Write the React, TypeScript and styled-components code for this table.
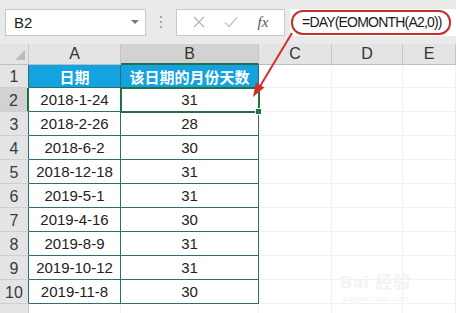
import React, { FC } from "react";
import styled, { createGlobalStyle, css } from "styled-components";

const GlobalStyle = createGlobalStyle`
  html, body {
    margin: 0;
    padding: 0;
    background: #ffffff;
  }
  body {
    font-family: "Liberation Sans", "Noto Sans CJK SC", sans-serif;
    width: 456px;
    height: 313px;
    overflow: hidden;
  }
`;

const teal = "#2b6f6f";
const green = "#217346";
const headGray = "#e4e4e4";

const Root = styled.div`
  position: relative;
  width: 456px;
  height: 313px;
  overflow: hidden;
  background: #fff;
`;

/* ---------- formula toolbar ---------- */

const Toolbar = styled.div`
  display: flex;
  align-items: center;
  height: 44px;
  padding-left: 5px;
  background: #eaeaea;
  box-sizing: border-box;
`;

const Field = styled.div<{ $width?: number }>`
  display: flex;
  align-items: center;
  box-sizing: border-box;
  height: 27px;
  width: ${({ $width }) => ($width ? `${$width}px` : "auto")};
  background: #fff;
  border: 1px solid #c9c9c9;
`;

const NameBox = styled(Field)`
  justify-content: space-between;
  padding: 0 6px 0 8px;
  font-size: 15px;
  color: #222;
`;

const Caret = styled.span`
  width: 0;
  height: 0;
  border-left: 4px solid transparent;
  border-right: 4px solid transparent;
  border-top: 4px solid #777;
`;

const Dots = styled.div`
  display: flex;
  flex-direction: column;
  gap: 3px;
  width: 30px;
  align-items: center;
  span {
    width: 2px;
    height: 2px;
    background: #a8a8a8;
  }
`;

const ButtonBox = styled(Field)`
  justify-content: space-around;
  padding: 0 6px;
`;

const FxLabel = styled.span`
  font-family: "Liberation Serif", serif;
  font-style: italic;
  font-size: 15px;
  color: #555;
`;

const FormulaBar = styled(Field)`
  flex: 1;
  margin-left: 5px;
  border: none;
  background: #fff;
  padding-left: 1px;
`;

const FormulaText = styled.div`
  display: flex;
  align-items: center;
  height: 25px;
  width: 160px;
  box-sizing: border-box;
  padding-left: 9px;
  border: 2px solid #c4302b;
  border-radius: 12px;
  font-family: "Liberation Sans", sans-serif;
  font-size: 14px;
  letter-spacing: -0.8px;
  color: #1a1a1a;
  white-space: nowrap;
`;

/* ---------- sheet grid ---------- */

const Sheet = styled.div`
  display: grid;
  grid-template-columns: 29px 92px 138px 73px 71px 1fr;
  grid-template-rows: 21px 23px repeat(10, 24px);
`;

const HeadCell = styled.div<{ $active?: boolean; $corner?: boolean }>`
  display: flex;
  align-items: center;
  justify-content: center;
  box-sizing: border-box;
  background: ${({ $active }) => ($active ? "#d2d2d2" : headGray)};
  border-right: 1px solid #c6c6c6;
  border-bottom: ${({ $active }) =>
    $active ? `2px solid ${green}` : "1px solid #bdbdbd"};
  font-size: 16px;
  color: #333;
  position: relative;
  ${({ $corner }) =>
    $corner &&
    css`
      &::after {
        content: "";
        position: absolute;
        right: 3px;
        bottom: 4px;
        border-left: 10px solid transparent;
        border-bottom: 10px solid #bcbcbc;
      }
    `}
`;

const RowHead = styled.div<{ $active?: boolean; $inTable?: boolean }>`
  display: flex;
  align-items: flex-end;
  justify-content: center;
  padding-bottom: 1px;
  box-sizing: border-box;
  background: ${({ $active }) => ($active ? "#d2d2d2" : headGray)};
  border-bottom: 1px solid #cfcfcf;
  border-right: ${({ $active, $inTable }) =>
    $active
      ? `2px solid ${green}`
      : $inTable
      ? `1px solid ${teal}`
      : "1px solid #c6c6c6"};
  font-size: 16px;
  color: #3a3a3a;
`;

const Cell = styled.div<{ $kind: "title" | "data" | "empty" }>`
  display: flex;
  align-items: center;
  justify-content: center;
  box-sizing: border-box;
  font-size: 15px;
  color: #222;
  white-space: nowrap;
  ${({ $kind }) =>
    $kind === "title" &&
    css`
      background: #14a3e0;
      color: #fff;
      font-family: "Noto Sans CJK SC", sans-serif;
      font-weight: bold;
      font-size: 15px;
      border-right: 1px solid ${teal};
      border-bottom: 1px solid ${teal};
    `}
  ${({ $kind }) =>
    $kind === "data" &&
    css`
      border-right: 1px solid ${teal};
      border-bottom: 1px solid ${teal};
    `}
  ${({ $kind }) =>
    $kind === "empty" &&
    css`
      border-right: 1px solid #f1f1f1;
      border-bottom: 1px solid #f1f1f1;
    `}
`;

const SelectedCell = styled(Cell)`
  position: relative;
  z-index: 2;
  outline: 2px solid ${green};
  outline-offset: -1px;

  &::after {
    content: "";
    position: absolute;
    right: -4px;
    bottom: -4px;
    width: 5px;
    height: 5px;
    background: ${green};
    border: 1px solid #fff;
  }
`;

const Overlay = styled.svg`
  position: absolute;
  left: 0;
  top: 0;
  z-index: 5;
  pointer-events: none;
`;

const Watermark = styled.div`
  position: absolute;
  left: 340px;
  top: 268px;
  display: flex;
  flex-direction: column;
  align-items: center;
  color: #f3f3f3;
  font-family: "Liberation Sans", "Noto Sans CJK SC", sans-serif;
  pointer-events: none;
`;

const WaterBrand = styled.div`
  font-size: 17px;
  font-weight: bold;
  letter-spacing: 1px;
`;

const WaterUrl = styled.div`
  font-size: 8px;
  margin-top: 1px;
`;

const rows: [string, string][] = [
  ["2018-1-24", "31"],
  ["2018-2-26", "28"],
  ["2018-6-2", "30"],
  ["2018-12-18", "31"],
  ["2019-5-1", "31"],
  ["2019-4-16", "30"],
  ["2019-8-9", "31"],
  ["2019-10-12", "31"],
  ["2019-11-8", "30"],
];

const columns = ["A", "B", "C", "D", "E"];

const EmptyTail: FC = () => (
  <>
    <Cell $kind="empty" />
    <Cell $kind="empty" />
    <Cell $kind="empty" />
  </>
);

const App: FC = () => {
  return (
    <Root>
      <GlobalStyle />
      <Toolbar>
        <NameBox $width={141}>
          <span>B2</span>
          <Caret />
        </NameBox>
        <Dots>
          <span />
          <span />
          <span />
        </Dots>
        <ButtonBox $width={109}>
          <svg width="12" height="12" viewBox="0 0 12 12">
            <path d="M1 1 L11 11 M11 1 L1 11" stroke="#b5b5b5" strokeWidth="1.3" />
          </svg>
          <svg width="14" height="12" viewBox="0 0 14 12">
            <path d="M1 6.5 L5 10.5 L13 1.5" stroke="#c4c4c4" strokeWidth="1.3" fill="none" />
          </svg>
          <FxLabel>fx</FxLabel>
        </ButtonBox>
        <FormulaBar>
          <FormulaText>=DAY(EOMONTH(A2,0))</FormulaText>
        </FormulaBar>
      </Toolbar>

      <Sheet>
        <HeadCell $corner />
        {columns.map((c) => (
          <HeadCell key={c} $active={c === "B"}>
            {c}
          </HeadCell>
        ))}

        <RowHead $inTable>1</RowHead>
        <Cell $kind="title">日期</Cell>
        <Cell $kind="title">该日期的月份天数</Cell>
        <EmptyTail />

        {rows.map(([date, days], i) => (
          <React.Fragment key={date}>
            <RowHead $inTable $active={i === 0}>
              {i + 2}
            </RowHead>
            <Cell $kind="data">{date}</Cell>
            {i === 0 ? (
              <SelectedCell $kind="data">{days}</SelectedCell>
            ) : (
              <Cell $kind="data">{days}</Cell>
            )}
            <EmptyTail />
          </React.Fragment>
        ))}

        <RowHead />
        <Cell $kind="empty" />
        <Cell $kind="empty" />
        <EmptyTail />
      </Sheet>

      <Overlay width="456" height="313" viewBox="0 0 456 313">
        <line x1="292" y1="33" x2="259" y2="88" stroke="#d0302c" strokeWidth="2" />
        <polygon points="253,97 264.4,87.4 255.8,82.4" fill="#d0302c" />
      </Overlay>

      <Watermark>
        <WaterBrand>Bai 经验</WaterBrand>
        <WaterUrl>jingyan.baidu.com</WaterUrl>
      </Watermark>
    </Root>
  );
};

export default App;
